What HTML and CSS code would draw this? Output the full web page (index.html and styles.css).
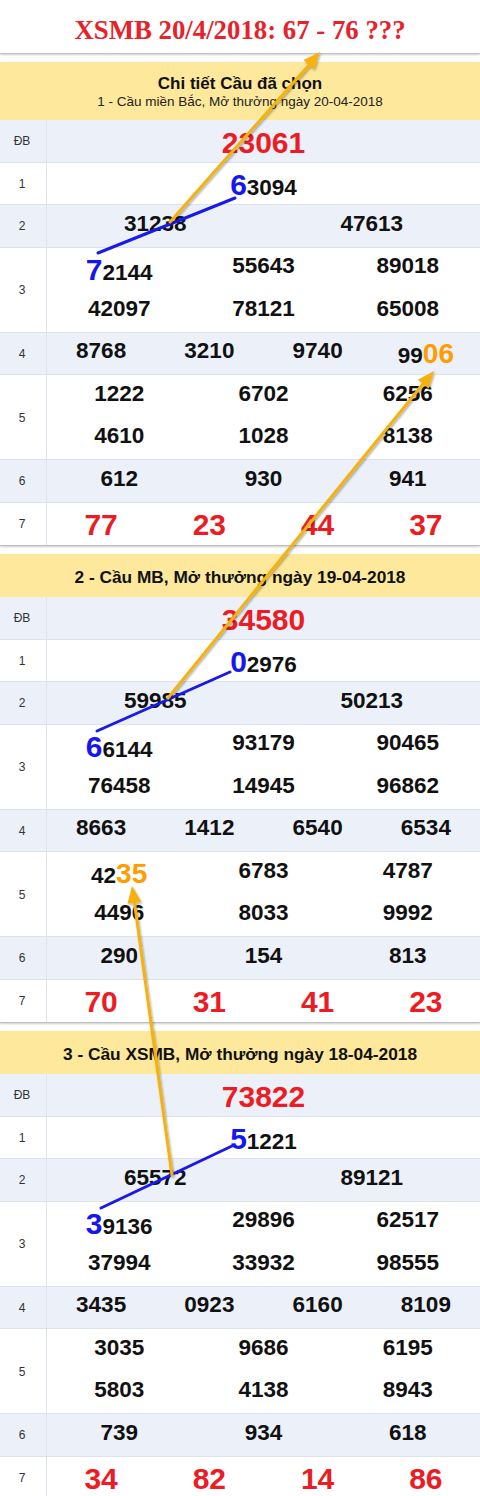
FILE: index.html
```html
<!DOCTYPE html>
<html lang="vi">
<head>
<meta charset="utf-8">
<title>XSMB 20/4/2018</title>
<link rel="stylesheet" href="styles.css">
</head>
<body>
<div class="page">
  <div class="title">XSMB 20/4/2018: 67 - 76 ???</div>

  <section class="block">
    <div class="hd hd-big">
      <div class="hd-t">Chi tiết Cầu đã chọn</div>
      <div class="hd-s">1 - Cầu miền Bắc, Mở thưởng ngày 20-04-2018</div>
    </div>
    <div class="row alt"><div class="lbl">ĐB</div><div class="cells c1 red"><div class="n">23061</div></div></div>
    <div class="row"><div class="lbl">1</div><div class="cells c1"><div class="n"><span class="bl">6</span>3094</div></div></div>
    <div class="row alt"><div class="lbl">2</div><div class="cells c2"><div class="n">31238</div><div class="n">47613</div></div></div>
    <div class="row dbl"><div class="lbl">3</div><div class="cells c3"><div class="n"><span class="bl">7</span>2144</div><div class="n">55643</div><div class="n">89018</div><div class="n">42097</div><div class="n">78121</div><div class="n">65008</div></div></div>
    <div class="row alt"><div class="lbl">4</div><div class="cells c4"><div class="n">8768</div><div class="n">3210</div><div class="n">9740</div><div class="n">99<span class="or">06</span></div></div></div>
    <div class="row dbl"><div class="lbl">5</div><div class="cells c3"><div class="n">1222</div><div class="n">6702</div><div class="n">6256</div><div class="n">4610</div><div class="n">1028</div><div class="n">8138</div></div></div>
    <div class="row alt"><div class="lbl">6</div><div class="cells c3"><div class="n">612</div><div class="n">930</div><div class="n">941</div></div></div>
    <div class="row last"><div class="lbl">7</div><div class="cells c4 red"><div class="n">77</div><div class="n">23</div><div class="n">44</div><div class="n">37</div></div></div>
  </section>

  <section class="block">
    <div class="hd hd-one">2 - Cầu MB, Mở thưởng ngày 19-04-2018</div>
    <div class="row alt"><div class="lbl">ĐB</div><div class="cells c1 red"><div class="n">34580</div></div></div>
    <div class="row"><div class="lbl">1</div><div class="cells c1"><div class="n"><span class="bl">0</span>2976</div></div></div>
    <div class="row alt"><div class="lbl">2</div><div class="cells c2"><div class="n">59985</div><div class="n">50213</div></div></div>
    <div class="row dbl"><div class="lbl">3</div><div class="cells c3"><div class="n"><span class="bl">6</span>6144</div><div class="n">93179</div><div class="n">90465</div><div class="n">76458</div><div class="n">14945</div><div class="n">96862</div></div></div>
    <div class="row alt"><div class="lbl">4</div><div class="cells c4"><div class="n">8663</div><div class="n">1412</div><div class="n">6540</div><div class="n">6534</div></div></div>
    <div class="row dbl"><div class="lbl">5</div><div class="cells c3"><div class="n">42<span class="or">35</span></div><div class="n">6783</div><div class="n">4787</div><div class="n">4496</div><div class="n">8033</div><div class="n">9992</div></div></div>
    <div class="row alt"><div class="lbl">6</div><div class="cells c3"><div class="n">290</div><div class="n">154</div><div class="n">813</div></div></div>
    <div class="row last"><div class="lbl">7</div><div class="cells c4 red"><div class="n">70</div><div class="n">31</div><div class="n">41</div><div class="n">23</div></div></div>
  </section>

  <section class="block">
    <div class="hd hd-one">3 - Cầu XSMB, Mở thưởng ngày 18-04-2018</div>
    <div class="row alt"><div class="lbl">ĐB</div><div class="cells c1 red"><div class="n">73822</div></div></div>
    <div class="row"><div class="lbl">1</div><div class="cells c1"><div class="n"><span class="bl">5</span>1221</div></div></div>
    <div class="row alt"><div class="lbl">2</div><div class="cells c2"><div class="n">65572</div><div class="n">89121</div></div></div>
    <div class="row dbl"><div class="lbl">3</div><div class="cells c3"><div class="n"><span class="bl">3</span>9136</div><div class="n">29896</div><div class="n">62517</div><div class="n">37994</div><div class="n">33932</div><div class="n">98555</div></div></div>
    <div class="row alt"><div class="lbl">4</div><div class="cells c4"><div class="n">3435</div><div class="n">0923</div><div class="n">6160</div><div class="n">8109</div></div></div>
    <div class="row dbl"><div class="lbl">5</div><div class="cells c3"><div class="n">3035</div><div class="n">9686</div><div class="n">6195</div><div class="n">5803</div><div class="n">4138</div><div class="n">8943</div></div></div>
    <div class="row alt"><div class="lbl">6</div><div class="cells c3"><div class="n">739</div><div class="n">934</div><div class="n">618</div></div></div>
    <div class="row last"><div class="lbl">7</div><div class="cells c4 red"><div class="n">34</div><div class="n">82</div><div class="n">14</div><div class="n">86</div></div></div>
  </section>

  <svg class="overlay" width="480" height="1496" viewBox="0 0 480 1496" aria-hidden="true">
    <defs>
      <filter id="sh" x="-20%" y="-20%" width="140%" height="140%">
        <feDropShadow dx="1" dy="1.5" stdDeviation="1.2" flood-color="#000" flood-opacity="0.35"/>
      </filter>
    </defs>
    <g class="blue-lines">
      <line x1="98" y1="253" x2="235" y2="198"/>
      <line x1="97" y1="731" x2="230" y2="672"/>
      <line x1="101" y1="1208" x2="232" y2="1146"/>
    </g>
    <g class="arrows" filter="url(#sh)">
      <line x1="170" y1="222" x2="309" y2="65"/>
      <polygon points="320,52 314,69.4 303.5,60.1"/>
      <line x1="168" y1="698" x2="423" y2="384"/>
      <polygon points="434,371 428.7,388.6 417.8,379.8"/>
      <line x1="172" y1="1175" x2="134.4" y2="902"/>
      <polygon points="132,886 141.3,901.8 127.5,903.8"/>
    </g>
  </svg>
</div>
</body>
</html>
```

FILE: styles.css
```css
* {
  box-sizing: border-box;
}

body {
  margin: 0;
  background: #fff;
  font-family: "Liberation Sans", Arial, sans-serif;
  color: #111;
}

.page {
  position: relative;
  width: 480px;
}

.title {
  height: 54px;
  padding-top: 15px;
  text-align: center;
  font-family: "Liberation Serif", "Times New Roman", serif;
  font-weight: bold;
  font-size: 26.8px;
  line-height: normal;
  color: #e6222a;
  border-bottom: 1px solid #c4c4c4;
  box-shadow: 0 1px 2px rgba(0, 0, 0, 0.2);
  margin-bottom: 8px;
}

.block {
  border-bottom: 1px solid #bdbdbd;
  box-shadow: 0 1px 2px rgba(0, 0, 0, 0.2);
  margin-bottom: 8px;
}

.hd {
  background: #fde89c;
  text-align: center;
  color: #111;
}

.hd-big {
  height: 58px;
  padding-top: 12px;
}

.hd-t {
  font-weight: bold;
  font-size: 17px;
  line-height: normal;
}

.hd-s {
  font-size: 13.5px;
  line-height: normal;
  color: #222;
}

.hd-one {
  height: 43px;
  padding-top: 12.5px;
  font-weight: bold;
  font-size: 17.3px;
  line-height: normal;
}

.row {
  display: grid;
  grid-template-columns: 47px 1fr;
  height: 42.5px;
  border-bottom: 1px solid #dde3eb;
  background: #fff;
}

.row.alt {
  background: #ebf0f9;
}

.row.dbl {
  height: 85px;
}

.row.last {
  border-bottom: none;
}

.lbl {
  display: flex;
  align-items: center;
  justify-content: center;
  padding-right: 2px;
  border-right: 1px solid #dde3eb;
  font-size: 12px;
  color: #333;
}

.cells {
  display: grid;
  grid-auto-rows: 42.5px;
}

.c1 { grid-template-columns: 1fr; }
.c2 { grid-template-columns: repeat(2, 1fr); }
.c3 { grid-template-columns: repeat(3, 1fr); }
.c4 { grid-template-columns: repeat(4, 1fr); }

.n {
  height: 42.5px;
  padding-top: 5.5px;
  text-align: center;
  font-weight: bold;
  font-size: 22.5px;
  line-height: normal;
  color: #111;
  white-space: nowrap;
}

.red .n {
  color: #ec1c24;
  font-size: 30px;
}

.bl {
  color: #1616ee;
  font-size: 30px;
}

.or {
  color: #ff9c00;
  font-size: 28px;
}

.overlay {
  position: absolute;
  top: 0;
  left: 0;
  pointer-events: none;
}

.blue-lines line {
  stroke: #1a1ae8;
  stroke-width: 3;
  stroke-linecap: round;
}

.arrows line {
  stroke: #f5b20f;
  stroke-width: 3;
  stroke-linecap: round;
}

.arrows polygon {
  fill: #f5b20f;
}
```
